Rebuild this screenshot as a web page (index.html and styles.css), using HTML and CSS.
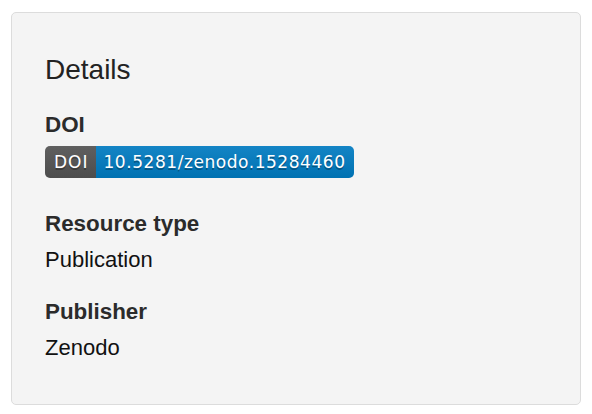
FILE: index.html
```html
<!DOCTYPE html>
<html lang="en">
<head>
<meta charset="utf-8">
<title>Details</title>
<link rel="stylesheet" href="styles.css">
</head>
<body>
  <section class="panel">
    <h2 class="panel-title">Details</h2>
    <dl class="details">
      <dt class="label">DOI</dt>
      <dd class="value value-badge">
        <span class="badge">
          <span class="badge-key">DOI</span><span class="badge-val">10.5281/zenodo.15284460</span>
        </span>
      </dd>
      <dt class="label">Resource type</dt>
      <dd class="value">Publication</dd>
      <dt class="label label-spaced">Publisher</dt>
      <dd class="value">Zenodo</dd>
    </dl>
  </section>
</body>
</html>
```

FILE: styles.css
```css
html, body {
  margin: 0;
  padding: 0;
  background: #ffffff;
}

body {
  font-family: "Liberation Sans", Arial, Helvetica, sans-serif;
  padding: 12px 11px 0 11px;
}

.panel {
  box-sizing: border-box;
  height: 393px;
  background: #f4f4f4;
  border: 1px solid #dcdcdc;
  border-radius: 5px;
  padding: 41px 32px 0 33px;
}

.panel-title {
  margin: 0;
  font-size: 28px;
  font-weight: normal;
  line-height: 32px;
  color: #222222;
}

.details {
  margin: 21px 0 0 0;
}

.label {
  font-size: 22.4px;
  line-height: 36px;
  font-weight: bold;
  color: #2b2b2b;
}

.label-spaced {
  margin-top: 16px;
}

.value {
  margin: 0;
  font-size: 22px;
  line-height: 36px;
  color: #111111;
}

.value-badge {
  line-height: normal;
  margin-top: 3px;
  margin-bottom: 28px;
  display: flex;
}

.badge {
  display: inline-flex;
  height: 32px;
  border-radius: 5px;
  overflow: hidden;
  font-family: "DejaVu Sans", Verdana, sans-serif;
  font-size: 17px;
  color: #ffffff;
  text-shadow: 0 1.5px 0 rgba(1, 1, 1, 0.3);
  letter-spacing: 0.55px;
}

.badge-key,
.badge-val {
  display: flex;
  align-items: center;
  background-image: linear-gradient(to bottom, rgba(187, 187, 187, 0.1), rgba(0, 0, 0, 0.1));
}

.badge-key {
  background-color: #555555;
  padding: 0 7px 0 9px;
  letter-spacing: 1px;
}

.badge-val {
  background-color: #007ec6;
  padding: 0 8px 0 8px;
}
```
